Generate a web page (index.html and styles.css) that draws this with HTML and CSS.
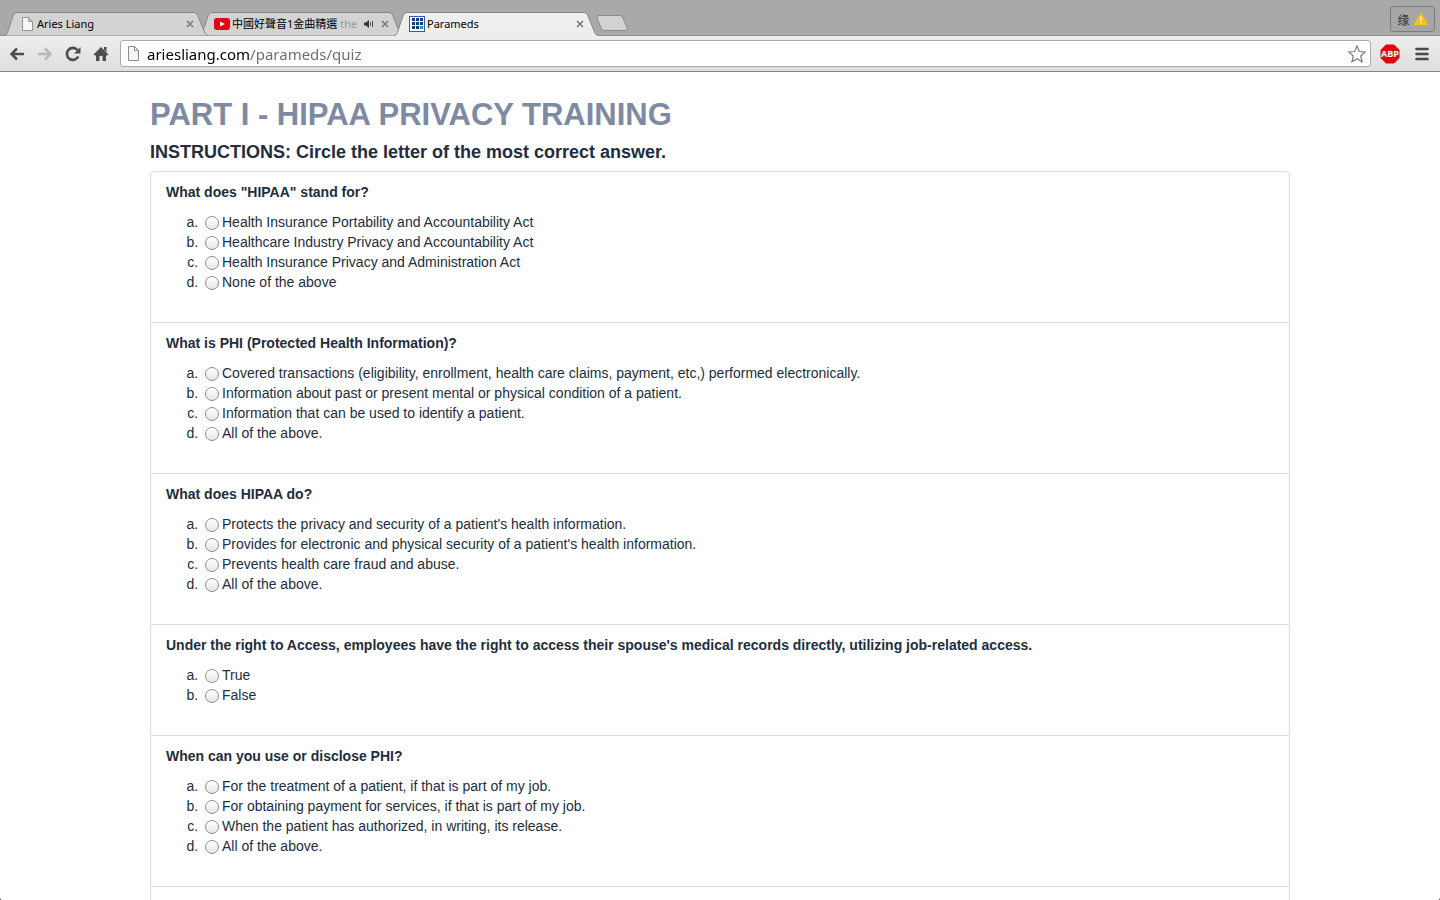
FILE: index.html
```html
<!DOCTYPE html>
<html lang="en">
<head>
<meta charset="utf-8">
<title>Parameds</title>
<link rel="stylesheet" href="styles.css">
</head>
<body>
<div class="window">
  <header class="chrome">
    <div class="tabstrip">
      <div class="tabs">
        <div class="tab tab-first">
          <svg class="tab-shape" viewBox="0 0 206 24" preserveAspectRatio="none"><path d="M0 24C3 23 3 21 4 19L9 4Q10 .5 13 .5H191Q194 .5 195 4L201 19C202 22 203 23 206 24Z"/></svg>
          <svg class="icon" width="16" height="16" viewBox="0 0 16 16"><path d="M3.500 1.500H9.500L13.500 5.500V14.500H3.500ZM9.500 1.500V5.500H13.500" fill="#f7f7f7" stroke="#969696"/></svg>
          <span class="tab-title">Aries Liang</span>
          <button class="tab-close" aria-label="Close tab"><svg width="8" height="8" viewBox="0 0 8 8"><path d="M1 1L7 7M7 1L1 7"/></svg></button>
        </div>
        <div class="tab">
          <svg class="tab-shape" viewBox="0 0 206 24" preserveAspectRatio="none"><path d="M0 24C3 23 3 21 4 19L9 4Q10 .5 13 .5H191Q194 .5 195 4L201 19C202 22 203 23 206 24Z"/></svg>
          <svg class="icon" width="16" height="16" viewBox="0 0 16 16"><rect y="2" width="16" height="12" rx="3" fill="#e60012"/><path d="M6 5.500V10.500L11 8Z" fill="#fff"/></svg>
          <span class="tab-title">中國好聲音1金曲精選 <span class="fade">the</span></span>
          <svg class="icon-sound" width="12" height="10" viewBox="0 0 12 10"><path d="M1 3.500H3L6 1V9L3 6.500H1Z" fill="#333"/><path d="M7.500 3.500V6.500M9.500 2V8" stroke="#444" fill="none"/></svg>
          <button class="tab-close" aria-label="Close tab"><svg width="8" height="8" viewBox="0 0 8 8"><path d="M1 1L7 7M7 1L1 7"/></svg></button>
        </div>
        <div class="tab tab-active">
          <svg class="tab-shape" viewBox="0 0 206 24" preserveAspectRatio="none"><path d="M0 24C3 23 3 21 4 19L9 4Q10 .5 13 .5H191Q194 .5 195 4L201 19C202 22 203 23 206 24"/></svg>
          <svg class="icon" width="16" height="16" viewBox="0 0 16 16"><rect x=".5" y=".5" width="15" height="15" fill="#fff" stroke="#3b55b5"/><path d="M3 2h3v3H3zM7 2h3v3H7zM11 2h3v3h-3zM3 6h3v3H3zM7 6h3v3H7zM11 6h3v3h-3zM3 10h3v3H3zM7 10h3v3H7z" fill="#123c7c"/><path d="M11 10h3v3h-3z" fill="#16a0a8"/></svg>
          <span class="tab-title">Parameds</span>
          <button class="tab-close" aria-label="Close tab"><svg width="8" height="8" viewBox="0 0 8 8"><path d="M1 1L7 7M7 1L1 7"/></svg></button>
        </div>
      </div>
      <button class="new-tab" aria-label="New tab"><svg width="32" height="17" viewBox="0 0 32 17"><path d="M3 .5H24Q26 .5 27 3L31 13Q32 15.500 29 15.500H9Q6 15.500 5 13L1 3Q0 .5 3 .5Z" fill="#d2d2d2" stroke="#8b8b8b"/></svg></button>
      <button class="profile">缘 <svg width="14" height="12" viewBox="0 0 14 12"><path d="M7 .5L13.500 11.500H.5Z" fill="#ffc20e" stroke="#ffc20e" stroke-linejoin="round"/><path d="M7 3.500V8M7 9V10.500" stroke="#fff" stroke-width="1.300"/></svg></button>
    </div>
    <div class="toolbar">
      <button class="tool" aria-label="Back"><svg width="16" height="14" viewBox="0 0 16 14"><path d="M15 7H3M8 1.500L2.500 7L8 12.500" fill="none" stroke="#4d4d4d" stroke-width="2.500"/></svg></button>
      <button class="tool" aria-label="Forward"><svg width="16" height="14" viewBox="0 0 16 14"><path d="M1 7H13M8 1.500L13.500 7L8 12.500" fill="none" stroke="#b9b9b9" stroke-width="2.500"/></svg></button>
      <button class="tool" aria-label="Reload"><svg width="16" height="16" viewBox="0 0 16 16"><path d="M13.300 10.500A6 6 0 1 1 12.500 4" fill="none" stroke="#4d4d4d" stroke-width="2.600"/><path d="M15.500 1V7.500H9Z" fill="#4d4d4d"/></svg></button>
      <button class="tool" aria-label="Home"><svg width="16" height="16" viewBox="0 0 16 16"><path d="M8 1L15.500 8.500L14 9.500H13V15H9.500V10H6.500V15H3V9.500H2L.5 8.500ZM11 1H13.500V6L11 3.500Z" fill="#4d4d4d"/></svg></button>
      <div class="omnibox">
        <svg width="16" height="18" viewBox="0 0 16 18"><path d="M3.500 1.500H9.500L13.500 5.500V15.500H3.500ZM9.500 1.500V5.500H13.500" fill="#f7f7f7" stroke="#8c8c8c"/></svg>
        <input class="address" type="text" aria-label="Address" value="ariesliang.com/parameds/quiz" spellcheck="false">
        <button class="star" aria-label="Bookmark this page"><svg width="18" height="18" viewBox="0 0 18 18"><path d="M9 1L11.300 6.500L17.200 7L12.700 11L14.100 16.800L9 13.700L3.900 16.800L5.300 11L.8 7L6.700 6.500Z" fill="#fff" stroke="#7c7c7c" stroke-width="1.200"/></svg></button>
      </div>
      <button class="adblock" aria-label="Adblock Plus"><svg width="20" height="20" viewBox="0 0 20 20"><path d="M6 .5H14L19.500 6V14L14 19.500H6L.5 14V6Z" fill="#d90b0b"/><text x="10" y="13" text-anchor="middle">ABP</text></svg></button>
      <button class="menu" aria-label="Menu"><svg width="14" height="14" viewBox="0 0 14 14"><path d="M1.500 2H12.500M1.500 7H12.500M1.500 12H12.500" stroke="#484848" stroke-width="2.600" stroke-linecap="round"/></svg></button>
    </div>
  </header>
  <main class="page">
    <form class="container">
      <h1>PART I - HIPAA PRIVACY TRAINING</h1>
      <h2>INSTRUCTIONS: Circle the letter of the most correct answer.</h2>
      <div class="questions">
        <section class="question">
          <h3>What does "HIPAA" stand for?</h3>
          <ol>
            <li><label><input type="radio" name="q1">Health Insurance Portability and Accountability Act</label></li>
            <li><label><input type="radio" name="q1">Healthcare Industry Privacy and Accountability Act</label></li>
            <li><label><input type="radio" name="q1">Health Insurance Privacy and Administration Act</label></li>
            <li><label><input type="radio" name="q1">None of the above</label></li>
          </ol>
        </section>
        <section class="question">
          <h3>What is PHI (Protected Health Information)?</h3>
          <ol>
            <li><label><input type="radio" name="q2">Covered transactions (eligibility, enrollment, health care claims, payment, etc,) performed electronically.</label></li>
            <li><label><input type="radio" name="q2">Information about past or present mental or physical condition of a patient.</label></li>
            <li><label><input type="radio" name="q2">Information that can be used to identify a patient.</label></li>
            <li><label><input type="radio" name="q2">All of the above.</label></li>
          </ol>
        </section>
        <section class="question">
          <h3>What does HIPAA do?</h3>
          <ol>
            <li><label><input type="radio" name="q3">Protects the privacy and security of a patient's health information.</label></li>
            <li><label><input type="radio" name="q3">Provides for electronic and physical security of a patient's health information.</label></li>
            <li><label><input type="radio" name="q3">Prevents health care fraud and abuse.</label></li>
            <li><label><input type="radio" name="q3">All of the above.</label></li>
          </ol>
        </section>
        <section class="question">
          <h3>Under the right to Access, employees have the right to access their spouse's medical records directly, utilizing job-related access.</h3>
          <ol>
            <li><label><input type="radio" name="q4">True</label></li>
            <li><label><input type="radio" name="q4">False</label></li>
          </ol>
        </section>
        <section class="question">
          <h3>When can you use or disclose PHI?</h3>
          <ol>
            <li><label><input type="radio" name="q5">For the treatment of a patient, if that is part of my job.</label></li>
            <li><label><input type="radio" name="q5">For obtaining payment for services, if that is part of my job.</label></li>
            <li><label><input type="radio" name="q5">When the patient has authorized, in writing, its release.</label></li>
            <li><label><input type="radio" name="q5">All of the above.</label></li>
          </ol>
        </section>
        <section class="question"></section>
      </div>
    </form>
  </main>
</div>
</body>
</html>
```
FILE: styles.css
```css
* { box-sizing: border-box; }
html { background: #000; }
body { margin: 0; }
button { padding: 0; border: 0; background: none; display: flex; align-items: center; justify-content: center; }
svg { display: block; flex: none; }

.window {
  display: flex;
  flex-direction: column;
  height: 100vh;
  overflow: hidden;
  border-radius: 0 0 2px 2px;
  background: #fff;
}

/* Browser frame */
.chrome { flex: none; font-family: "Noto Sans", "Noto Sans CJK TC", sans-serif; }
.tabstrip {
  display: flex;
  align-items: flex-end;
  height: 36px;
  padding: 0 5px 0 4px;
  background: #a9a9a9;
  border-bottom: 1px solid #8e8e8e;
}
.tabs { display: flex; margin-bottom: -1px; }
.tab {
  position: relative;
  display: flex;
  align-items: center;
  width: 205px;
  height: 24px;
  margin-right: -10px;
  padding: 0 14px 0 15px;
  font-size: 11px;
  color: #000;
}
.tab-first, .tab-active { z-index: 1; }
.tab-shape { position: absolute; inset: 0; width: 100%; height: 100%; fill: #d3d3d3; stroke: #858585; }
.tab-active .tab-shape { fill: #eee; }
.icon { position: relative; }
.tab-title { position: relative; flex: 1; min-width: 0; margin-left: 2px; line-height: 16px; white-space: nowrap; }
.fade { color: #999; }
.icon-sound { position: relative; margin-right: 5px; }
.tab-close { position: relative; width: 10px; height: 16px; }
.tab-close path { stroke: #777; stroke-width: 1.5; }
.new-tab { margin: 0 auto 3px 7px; }
.profile {
  gap: 4px;
  width: 45px;
  height: 26px;
  margin-bottom: 3px;
  border: 1px solid #7d7d7d;
  border-radius: 3px;
  background: #a6a6a6;
  font: 12px "Noto Sans CJK SC", sans-serif;
  color: #333;
}
.toolbar {
  display: flex;
  align-items: center;
  height: 36px;
  padding: 0 9px;
  gap: 12px;
  background: linear-gradient(#eee, #dedede);
  border-bottom: 1px solid #858585;
}
.tool { width: 16px; height: 24px; }
.omnibox {
  display: flex;
  align-items: center;
  flex: 1;
  height: 27px;
  margin-left: -1px;
  padding: 0 4px;
  border: 1px solid #ababab;
  border-radius: 3px;
  background: #fff;
}
.address {
  flex: 1;
  min-width: 0;
  height: 22px;
  margin-left: 6px;
  padding: 0;
  border: 0;
  outline: 0;
  font: 15px/20px "Noto Sans", sans-serif;
  color: transparent;
  background: linear-gradient(90deg, #000 103px, #6b6b6b 103px);
  -webkit-background-clip: text;
  background-clip: text;
}
.adblock { margin-left: -3px; }
.adblock text { font: bold 9px "Open Sans", sans-serif; fill: #fff; }
.menu { margin: 0 2px 0 3px; }

/* Quiz */
.page {
  flex: 1;
  min-height: 0;
  overflow: hidden;
  font: 14px/20px "Liberation Sans", Arial, sans-serif;
  color: #222d40;
}
.container { max-width: 1170px; margin: 0 auto; padding: 25px 15px 0; }
h1 { margin: 0 0 9px; font-size: 31px; line-height: 36px; color: #7e8aa3; }
h2 { margin: 0 0 8px; font-size: 18px; line-height: 21px; }
.question { min-height: 60px; padding: 10px 15px; border: 1px solid #ddd; }
.question + .question { margin-top: -1px; }
.question:first-child { border-radius: 4px 4px 0 0; }
h3 { margin: 0 0 10px; font-size: 14px; line-height: 20px; }
ol { margin: 0 0 20px; padding-left: 36px; list-style: lower-alpha; }
li { padding-left: 4px; }
input[type="radio"] {
  appearance: none;
  width: 14px;
  height: 14px;
  margin: 0 3px 0 -1px;
  vertical-align: -3px;
  border: 1px solid #8f8f8f;
  border-radius: 50%;
  background: linear-gradient(#fff, #e6e6e6);
}
input[type="radio"]:checked { background: radial-gradient(#333 3px, #eee 4px); }
```
